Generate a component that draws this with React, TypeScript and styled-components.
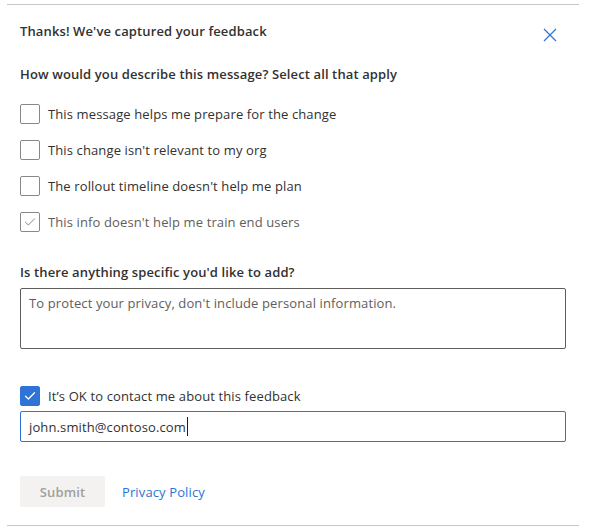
import React from "react";
import styled, { createGlobalStyle } from "styled-components";

const Global = createGlobalStyle`
  html, body { margin: 0; padding: 0; background: #ffffff; }
  body { font-family: "Segoe UI", "Open Sans", "Noto Sans", sans-serif; color: #323130; letter-spacing: 0.12px; }
`;

const Panel = styled.div`
  margin: 4px 0 0 7px;
  width: 572px;
  box-sizing: border-box;
  border-top: 1px solid #c8c6c4;
  border-bottom: 1px solid #c8c6c4;
  padding: 0 13px 18px 13px;
  display: flex;
  flex-direction: column;
`;

const Header = styled.div`
  display: flex;
  justify-content: space-between;
  align-items: flex-start;
  padding-top: 14px;
`;

const Title = styled.div`
  font-size: 13px;
  font-weight: 600;
  line-height: 20px;
  padding-top: 2px;
  color: #323130;
`;

const CloseButton = styled.button`
  width: 32px;
  height: 32px;
  border: none;
  background: transparent;
  padding: 0;
  display: flex;
  align-items: center;
  justify-content: center;
  cursor: pointer;
`;

const Question = styled.div<{ $top: number }>`
  font-size: 13px;
  font-weight: 600;
  line-height: 20px;
  margin-top: ${(p) => p.$top}px;
  color: #323130;
`;

const OptionList = styled.div`
  display: flex;
  flex-direction: column;
  gap: 16px;
  margin-top: 20px;
`;

const Row = styled.label<{ $muted?: boolean }>`
  display: flex;
  align-items: center;
  gap: 8px;
  height: 20px;
  font-size: 13px;
  line-height: 20px;
  color: ${(p) => (p.$muted ? "#605e5c" : "#323130")};
`;

const Box = styled.span<{ $variant: "empty" | "muted" | "primary" }>`
  width: 20px;
  height: 20px;
  box-sizing: border-box;
  border-radius: 2px;
  flex: none;
  display: flex;
  align-items: center;
  justify-content: center;
  border: 1px solid
    ${(p) => (p.$variant === "primary" ? "#2f73d6" : "#8a8886")};
  background: ${(p) => (p.$variant === "primary" ? "#2f73d6" : "#ffffff")};
`;

const TextArea = styled.div`
  margin-top: 6px;
  height: 61px;
  box-sizing: border-box;
  border: 1px solid #605e5c;
  border-radius: 2px;
  padding: 4px 8px;
  font-size: 13px;
  line-height: 20px;
  color: #605e5c;
`;

const ContactRow = styled(Row)`
  margin-top: 37px;
`;

const EmailInput = styled.div`
  margin-top: 5px;
  height: 31px;
  box-sizing: border-box;
  border: 1px solid #2f73d6;
  border-radius: 2px;
  padding: 0 8px;
  display: flex;
  align-items: center;
  font-size: 13px;
  color: #323130;
`;

const Caret = styled.span`
  display: inline-block;
  width: 1px;
  height: 19px;
  background: #201f1e;
  margin-left: 1px;
`;

const Actions = styled.div`
  display: flex;
  align-items: center;
  gap: 17px;
  margin-top: 34px;
`;

const SubmitButton = styled.button`
  width: 85px;
  height: 31px;
  border: none;
  border-radius: 2px;
  background: #f3f2f1;
  color: #a19f9d;
  font-family: inherit;
  letter-spacing: inherit;
  font-size: 13px;
  font-weight: 600;
  padding: 0;
`;

const Link = styled.a`
  font-size: 13px;
  color: #2f73d6;
  text-decoration: none;
  line-height: 20px;
`;

const CheckMark = ({ color, width }: { color: string; width: number }) => (
  <svg width="12" height="12" viewBox="0 0 12 12">
    <path d="M1.5 6.2 L4.4 9 L10.5 2.8" fill="none" stroke={color} strokeWidth={width} strokeLinecap="round" strokeLinejoin="round" />
  </svg>
);

const options = [
  { text: "This message helps me prepare for the change", checked: false },
  { text: "This change isn't relevant to my org", checked: false },
  { text: "The rollout timeline doesn't help me plan", checked: false },
  { text: "This info doesn't help me train end users", checked: true },
];

export default function App() {
  return (
    <>
      <Global />
      <Panel>
        <Header>
          <Title>Thanks! We've captured your feedback</Title>
          <CloseButton aria-label="Close">
            <svg width="14" height="14" viewBox="0 0 14 14">
              <path d="M1 1 L13 13 M13 1 L1 13" stroke="#2f73d6" strokeWidth="1.2" fill="none" />
            </svg>
          </CloseButton>
        </Header>
        <Question $top={13}>How would you describe this message? Select all that apply</Question>
        <OptionList>
          {options.map((o) => (
            <Row key={o.text} $muted={o.checked}>
              <Box $variant={o.checked ? "muted" : "empty"}>
                {o.checked && <CheckMark color="#8a8886" width={1} />}
              </Box>
              {o.text}
            </Row>
          ))}
        </OptionList>
        <Question $top={30}>Is there anything specific you'd like to add?</Question>
        <TextArea>To protect your privacy, don't include personal information.</TextArea>
        <ContactRow>
          <Box $variant="primary">
            <CheckMark color="#ffffff" width={1.3} />
          </Box>
          It’s OK to contact me about this feedback
        </ContactRow>
        <EmailInput>
          john.smith@contoso.com
          <Caret />
        </EmailInput>
        <Actions>
          <SubmitButton disabled>Submit</SubmitButton>
          <Link href="#">Privacy Policy</Link>
        </Actions>
      </Panel>
    </>
  );
}
